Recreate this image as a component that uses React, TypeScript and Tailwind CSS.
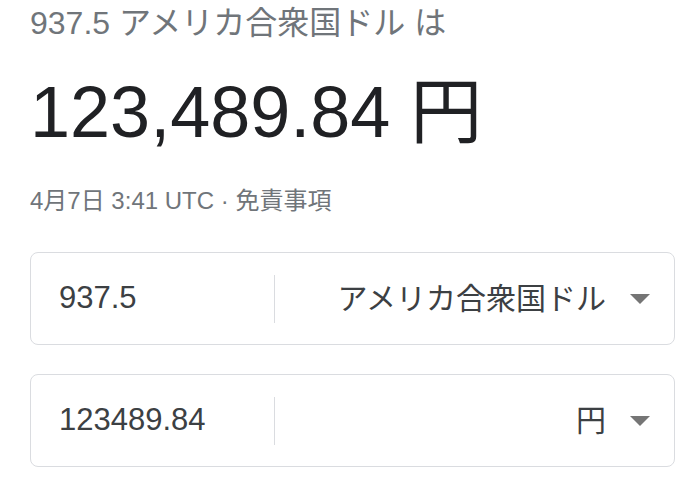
import React from 'react';

const font = "font-['Liberation_Sans','Noto_Sans_CJK_JP',sans-serif]";

const Caret: React.FC = () => (
  <svg className="w-[20px] h-[10px] ml-[24px] shrink-0" viewBox="0 0 20 10">
    <path d="M0 0h20L10 10z" fill="#757575" />
  </svg>
);

const CurrencyRow: React.FC<{ amount: string; unit: string }> = ({ amount, unit }) => (
  <div className="flex items-center h-[93px] rounded-[8px] border border-[#dadce0] bg-white">
    <div className="w-[243px] shrink-0 pl-[28px] text-[31px] text-[#3c4043]">{amount}</div>
    <div className="w-px h-[48px] bg-[#dadce0]" />
    <div className="flex-1 flex items-center justify-end pr-[24px] text-[30px] text-[#3c4043]">
      <span>{unit}</span>
      <Caret />
    </div>
  </div>
);

export default function App() {
  return (
    <div className={`${font} bg-white w-[687px] h-[497px] overflow-hidden pl-[30px] pr-[12px]`}>
      <div className="pt-[4px] text-[32px] leading-[38px] text-[#70757a]">937.5 アメリカ合衆国ドル は</div>
      <div className="mt-[27px] text-[72px] leading-[86px] text-[#202124]">123,489.84 円</div>
      <div className="mt-[31px] text-[24px] leading-[30px] text-[#70757a]">4月7日 3:41 UTC · 免責事項</div>
      <div className="mt-[36px] flex flex-col gap-[29px]">
        <CurrencyRow amount="937.5" unit="アメリカ合衆国ドル" />
        <CurrencyRow amount="123489.84" unit="円" />
      </div>
    </div>
  );
}
